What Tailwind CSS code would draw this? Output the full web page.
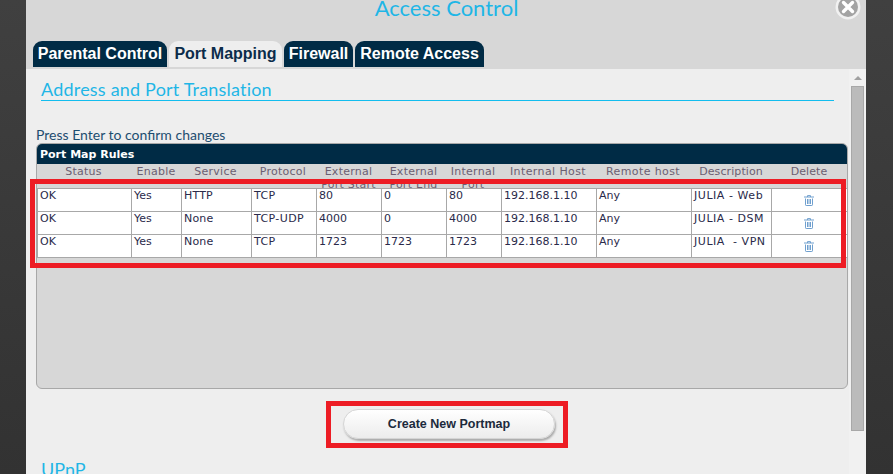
<!DOCTYPE html>
<html lang="en">
<head>
  <meta charset="UTF-8">
  <title>Access Control</title>
  <script src="https://cdn.jsdelivr.net/npm/@tailwindcss/browser@4"></script>
</head>
<body class="h-[474px] overflow-hidden bg-linear-to-b from-[#404040] to-[#323232]">
  <div class="relative ml-[26px] w-[840px] h-[474px] overflow-hidden bg-[#d7d7d7]">
    <!-- header -->
    <h1 class="h-[41px] -mt-[6px] text-center text-[22px] leading-[28px] text-[#1fb6e6] font-['Lato',sans-serif] pl-[1px]">Access Control</h1>
    <svg class="absolute left-[809px] -top-[6px] w-[26px] h-[26px]" viewBox="0 0 26 26">
      <circle cx="13" cy="13" r="12.5" fill="#f1f1f1"/>
      <circle cx="13" cy="13" r="10" fill="#a3a3a3"/>
      <path d="M8.500 8.500l9 9M17.500 8.500l-9 9" stroke="#fff" stroke-width="3.4" stroke-linecap="round"/>
    </svg>

    <!-- tabs -->
    <div class="flex gap-[2px] pl-[7px] mt-[6px] h-[28px] font-['Liberation_Sans',sans-serif] font-bold text-base">
      <div class="w-[134px] h-[26px] rounded-t-[9px] bg-[#002b45] text-white text-center leading-[26px]">Parental Control</div>
      <div class="w-[113px] h-[26px] rounded-t-[9px] bg-[#eeeeee] text-[#0b2c4a] text-center leading-[26px]">Port Mapping</div>
      <div class="w-[69px] h-[26px] rounded-t-[9px] bg-[#002b45] text-white text-center leading-[26px]">Firewall</div>
      <div class="w-[129px] h-[26px] rounded-t-[9px] bg-[#002b45] text-white text-center leading-[26px]">Remote Access</div>
    </div>

    <!-- body -->
    <div class="flex h-[405px] bg-[#eeeeee]">
      <div class="w-[823px] overflow-hidden">
        <h2 class="ml-[15px] mr-[15px] mt-[8px] h-[24px] border-b border-[#12bdee] text-[18px] leading-[25px] tracking-[0.2px] text-[#1fb6e6] font-['Lato',sans-serif]">Address and Port Translation</h2>
        <p class="ml-[10px] mt-[26px] text-[14px] leading-[16px] text-[#1d4d70] font-['Lato',sans-serif]">Press Enter to confirm changes</p>

        <div class="ml-[10px] w-[812px] h-[246px] rounded-[6px] border border-[#a8a8a8] bg-[#d7d7d7] overflow-hidden font-['DejaVu_Sans',sans-serif] text-[11px]">
          <div class="h-[20px] bg-[#002b45] pl-[3px] text-white font-bold leading-[21px]">Port Map Rules</div>
          <table class="table-fixed border-collapse w-[810px] text-[#2a2a4a]">
            <colgroup>
              <col class="w-[94px]"><col class="w-[50px]"><col class="w-[70px]"><col class="w-[65px]"><col class="w-[65px]"><col class="w-[65px]"><col class="w-[55px]"><col class="w-[95px]"><col class="w-[95px]"><col class="w-[80px]"><col class="w-[76px]">
            </colgroup>
            <thead class="text-[#6b5f72]">
              <tr class="h-[24px]">
                <th class="font-normal align-top leading-[14px] tracking-[0.25px] pr-[2px] pt-[1px]"><div class="h-[23px]">Status</div></th>
                <th class="font-normal align-top leading-[14px] tracking-[0.25px] pr-[1px] pt-[1px]"><div class="h-[23px]">Enable</div></th>
                <th class="font-normal align-top leading-[14px] tracking-[0.25px] pr-[2px] pt-[1px]"><div class="h-[23px]">Service</div></th>
                <th class="font-normal align-top leading-[14px] tracking-[0.25px] pr-[2px] pt-[1px]"><div class="h-[23px]">Protocol</div></th>
                <th class="font-normal align-top leading-[13px] tracking-[0.25px] pr-[1px] pt-[1px]"><div class="h-[23px]">External Port Start</div></th>
                <th class="font-normal align-top leading-[13px] tracking-[0.25px] pr-[1px] pt-[1px]"><div class="h-[23px]">External Port End</div></th>
                <th class="font-normal align-top leading-[13px] tracking-[0.25px] pr-[2px] pt-[1px]"><div class="h-[23px]">Internal Port</div></th>
                <th class="font-normal align-top leading-[14px] tracking-[0.4px] pr-[2px] pt-[1px]"><div class="h-[23px]">Internal Host</div></th>
                <th class="font-normal align-top leading-[14px] tracking-[0.4px] pr-[2px] pt-[1px]"><div class="h-[23px]">Remote host</div></th>
                <th class="font-normal align-top leading-[14px] tracking-[0.1px] pr-[1px] pt-[1px]"><div class="h-[23px]">Description</div></th>
                <th class="font-normal align-top leading-[14px] tracking-[0.1px] pr-[1px] pt-[1px]"><div class="h-[23px]">Delete</div></th>
              </tr>
            </thead>
            <tbody class="bg-white">
              <tr class="h-[23px]">
                <td class="border border-[#a8a8a8] align-top pl-[2px] leading-[13px]">OK</td>
                <td class="border border-[#a8a8a8] align-top pl-[2px] leading-[13px]">Yes</td>
                <td class="border border-[#a8a8a8] align-top pl-[2px] leading-[13px] tracking-[0.2px]">HTTP</td>
                <td class="border border-[#a8a8a8] align-top pl-[2px] leading-[13px] tracking-[0.4px]">TCP</td>
                <td class="border border-[#a8a8a8] align-top pl-[2px] leading-[13px]">80</td>
                <td class="border border-[#a8a8a8] align-top pl-[2px] leading-[13px]">0</td>
                <td class="border border-[#a8a8a8] align-top pl-[2px] leading-[13px]">80</td>
                <td class="border border-[#a8a8a8] align-top pl-[2px] leading-[13px]">192.168.1.10</td>
                <td class="border border-[#a8a8a8] align-top pl-[2px] leading-[13px]">Any</td>
                <td class="border border-[#a8a8a8] align-top pl-[2px] leading-[13px] tracking-[0.55px]">JULIA - Web</td>
                <td class="border border-[#a8a8a8] align-top pt-[6px] pr-[2px]">
                  <svg class="mx-auto w-[10px] h-[11px]" viewBox="0 0 10 11" fill="none" stroke="#6f9fce"><path d="M0 2h10M3.500 2V.6h3V2"/><path d="M1.500 3.500v6.300q0 .7.7.7h5.600q.7 0 .7-.7V3.500M3.500 4v5M5 4v5M6.500 4v5"/></svg>
                </td>
              </tr>
              <tr class="h-[23px]">
                <td class="border border-[#a8a8a8] align-top pl-[2px] leading-[13px]">OK</td>
                <td class="border border-[#a8a8a8] align-top pl-[2px] leading-[13px]">Yes</td>
                <td class="border border-[#a8a8a8] align-top pl-[2px] leading-[13px] tracking-[0.2px]">None</td>
                <td class="border border-[#a8a8a8] align-top pl-[2px] leading-[13px] tracking-[0.4px]">TCP-UDP</td>
                <td class="border border-[#a8a8a8] align-top pl-[2px] leading-[13px]">4000</td>
                <td class="border border-[#a8a8a8] align-top pl-[2px] leading-[13px]">0</td>
                <td class="border border-[#a8a8a8] align-top pl-[2px] leading-[13px]">4000</td>
                <td class="border border-[#a8a8a8] align-top pl-[2px] leading-[13px]">192.168.1.10</td>
                <td class="border border-[#a8a8a8] align-top pl-[2px] leading-[13px]">Any</td>
                <td class="border border-[#a8a8a8] align-top pl-[2px] leading-[13px] tracking-[0.55px]">JULIA - DSM</td>
                <td class="border border-[#a8a8a8] align-top pt-[6px] pr-[2px]">
                  <svg class="mx-auto w-[10px] h-[11px]" viewBox="0 0 10 11" fill="none" stroke="#6f9fce"><path d="M0 2h10M3.500 2V.6h3V2"/><path d="M1.500 3.500v6.300q0 .7.7.7h5.600q.7 0 .7-.7V3.500M3.500 4v5M5 4v5M6.500 4v5"/></svg>
                </td>
              </tr>
              <tr class="h-[23px]">
                <td class="border border-[#a8a8a8] align-top pl-[2px] leading-[13px]">OK</td>
                <td class="border border-[#a8a8a8] align-top pl-[2px] leading-[13px]">Yes</td>
                <td class="border border-[#a8a8a8] align-top pl-[2px] leading-[13px] tracking-[0.2px]">None</td>
                <td class="border border-[#a8a8a8] align-top pl-[2px] leading-[13px] tracking-[0.4px]">TCP</td>
                <td class="border border-[#a8a8a8] align-top pl-[2px] leading-[13px]">1723</td>
                <td class="border border-[#a8a8a8] align-top pl-[2px] leading-[13px]">1723</td>
                <td class="border border-[#a8a8a8] align-top pl-[2px] leading-[13px]">1723</td>
                <td class="border border-[#a8a8a8] align-top pl-[2px] leading-[13px]">192.168.1.10</td>
                <td class="border border-[#a8a8a8] align-top pl-[2px] leading-[13px]">Any</td>
                <td class="border border-[#a8a8a8] align-top pl-[2px] leading-[13px] whitespace-pre tracking-[0.55px]">JULIA  - VPN</td>
                <td class="border border-[#a8a8a8] align-top pt-[6px] pr-[2px]">
                  <svg class="mx-auto w-[10px] h-[11px]" viewBox="0 0 10 11" fill="none" stroke="#6f9fce"><path d="M0 2h10M3.500 2V.6h3V2"/><path d="M1.500 3.500v6.300q0 .7.7.7h5.600q.7 0 .7-.7V3.500M3.500 4v5M5 4v5M6.500 4v5"/></svg>
                </td>
              </tr>
            </tbody>
          </table>
        </div>

        <div class="ml-[317px] mt-[20px] w-[212px] h-[30px] rounded-full border border-[#d5d5d5] bg-linear-to-b from-white to-[#ececec] shadow-[1px_2px_2px_#aaaaaa] text-center text-[12.5px] leading-[28px] font-bold text-[#1c2a3c] font-['Liberation_Sans',sans-serif]">Create New Portmap</div>
        <h2 class="ml-[15px] mt-[18px] text-[18px] leading-[24px] text-[#1fb6e6] font-['Lato',sans-serif]">UPnP</h2>
      </div>

      <!-- scrollbar -->
      <div class="w-[17px] flex flex-col items-center bg-[#f1f1f1]">
        <div class="mt-[7px] w-0 h-0 border-x-[4px] border-x-transparent border-b-[4px] border-b-[#a0a0a0]"></div>
        <div class="mt-[6px] w-[13px] h-[345px] bg-[#bbbbbb] border border-[#a8a8a8]"></div>
      </div>
    </div>
  </div>

  <!-- red annotation boxes drawn over the screenshot -->
  <div class="absolute left-[30px] top-[179px] w-[816px] h-[89px] border-[5px] border-[#ed1c24]"></div>
  <div class="absolute left-[326px] top-[401px] w-[242px] h-[47px] border-[5px] border-[#ed1c24]"></div>
</body>
</html>
